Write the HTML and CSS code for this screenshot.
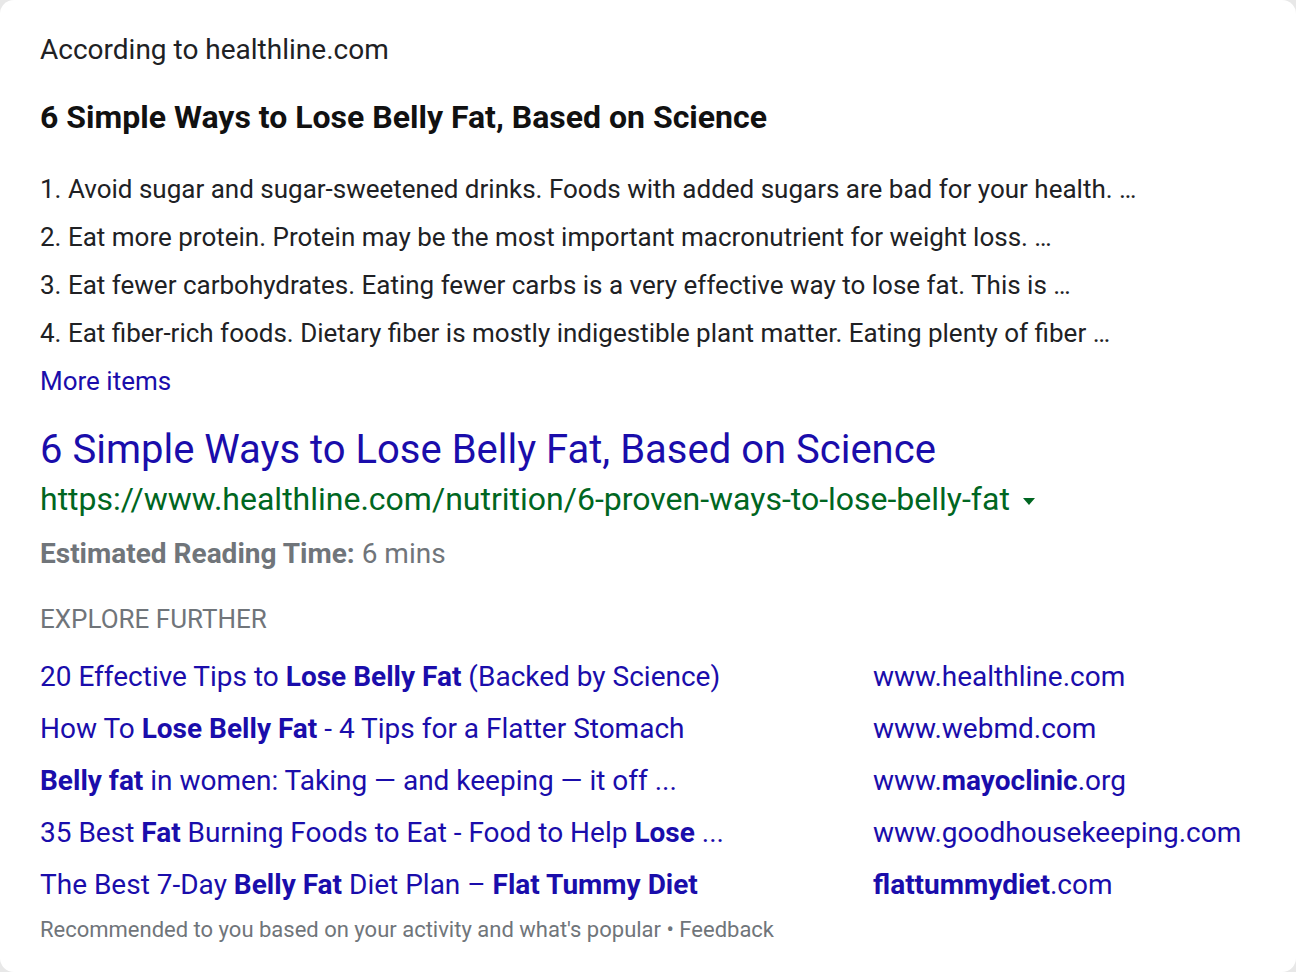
FILE: index.html
```html
<!DOCTYPE html>
<html>
<head>
<meta charset="utf-8">
<link rel="stylesheet" href="styles.css">
</head>
<body>
<div class="card">
  <div class="source">According to healthline.com</div>
  <h2 class="snippet-title">6 Simple Ways to Lose Belly Fat, Based on Science</h2>
  <ol class="steps">
    <li>1. Avoid sugar and sugar-sweetened drinks. Foods with added sugars are bad for your health. …</li>
    <li>2. Eat more protein. Protein may be the most important macronutrient for weight loss. …</li>
    <li>3. Eat fewer carbohydrates. Eating fewer carbs is a very effective way to lose fat. This is …</li>
    <li>4. Eat fiber-rich foods. Dietary fiber is mostly indigestible plant matter. Eating plenty of fiber …</li>
  </ol>
  <a class="more" href="#">More items</a>
  <a class="result-title" href="#">6 Simple Ways to Lose Belly Fat, Based on Science</a>
  <div class="url">https://www.healthline.com/nutrition/6-proven-ways-to-lose-belly-fat <span class="caret"></span></div>
  <div class="reading"><b>Estimated Reading Time:</b> 6 mins</div>
  <div class="explore-head">EXPLORE FURTHER</div>
  <div class="explore">
    <a href="#">20 Effective Tips to <b>Lose Belly Fat</b> (Backed by Science)</a>
    <a href="#">www.healthline.com</a>
    <a href="#">How To <b>Lose Belly Fat</b> - 4 Tips for a Flatter Stomach</a>
    <a href="#">www.webmd.com</a>
    <a href="#"><b>Belly fat</b> in women: Taking — and keeping — it off ...</a>
    <a href="#">www.<b>mayoclinic</b>.org</a>
    <a href="#">35 Best <b>Fat</b> Burning Foods to Eat - Food to Help <b>Lose</b> ...</a>
    <a href="#">www.goodhousekeeping.com</a>
    <a href="#">The Best 7-Day <b>Belly Fat</b> Diet Plan – <b>Flat Tummy Diet</b></a>
    <a href="#"><b>flattummydiet</b>.com</a>
  </div>
  <div class="footer">Recommended to you based on your activity and what's popular • Feedback</div>
</div>
</body>
</html>
```

FILE: styles.css
```css
html, body {
  margin: 0;
  padding: 0;
  background: #e8e8e8;
}
body {
  font-family: Roboto, "Liberation Sans", Arial, sans-serif;
  color: #202124;
}
a {
  color: #1a0dab;
  text-decoration: none;
}
.card {
  box-sizing: border-box;
  width: 1296px;
  height: 972px;
  background: #ffffff;
  border-radius: 14px;
  padding: 30px 40px 0 40px;
  display: flex;
  flex-direction: column;
  align-items: flex-start;
}
.source {
  font-size: 28px;
  line-height: 40px;
}
.snippet-title {
  margin: 27px 0 0 0;
  font-size: 32px;
  line-height: 40px;
  font-weight: 700;
  color: #111;
}
.steps {
  list-style: none;
  margin: 28px 0 0 0;
  padding: 0;
}
.steps li {
  font-size: 26px;
  line-height: 48px;
}
.more {
  font-size: 26px;
  line-height: 48px;
}
.result-title {
  margin-top: 21px;
  font-size: 40px;
  line-height: 48px;
}
.url {
  margin-top: 1px;
  font-size: 32px;
  line-height: 48px;
  color: #006621;
  display: flex;
  align-items: center;
}
.caret {
  display: inline-block;
  margin-left: 13px;
  margin-top: 5px;
  width: 0;
  height: 0;
  border-left: 6px solid transparent;
  border-right: 6px solid transparent;
  border-top: 7px solid #006621;
}
.reading {
  margin-top: 7px;
  font-size: 28px;
  line-height: 48px;
  color: #70757a;
}
.reading b {
  font-weight: 700;
}
.explore-head {
  margin-top: 23px;
  font-size: 26px;
  line-height: 36px;
  color: #70757a;
}
.explore {
  margin-top: 13px;
  display: grid;
  grid-template-columns: 833px auto;
  grid-auto-rows: 52px;
  align-items: center;
  font-size: 28px;
}
.footer {
  font-size: 22px;
  line-height: 40px;
  color: #70757a;
}
```
